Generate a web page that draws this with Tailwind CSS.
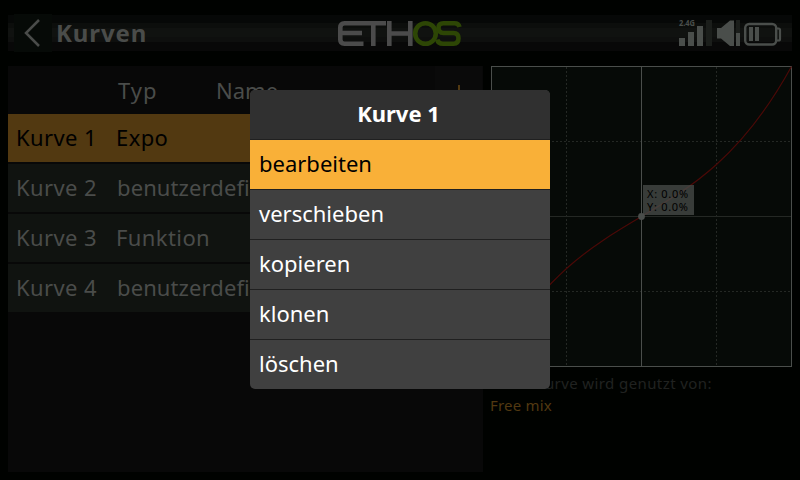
<!DOCTYPE html>
<html lang="de">
<head>
<meta charset="utf-8">
<title>Kurven</title>
<script src="https://cdn.jsdelivr.net/npm/@tailwindcss/browser@4"></script>
</head>
<body class="bg-black">
<div class="relative w-[800px] h-[480px] overflow-hidden bg-[#000200] px-2 pb-2 font-['Noto_Sans','Open_Sans',sans-serif] text-[22px] text-[#4a4c4a] whitespace-nowrap flex flex-col">
  <header class="h-[66px] shrink-0 pt-[15px]">
    <div class="relative h-9 flex items-center bg-[linear-gradient(#060807_0_8px,#0c0e0c_8px_13px,#101210_13px_22px,#0e0f0e_22px_27px,#080808_27px)]">
      <svg class="ml-[6px] w-[38px] h-[38px] bg-[#060a07]" viewBox="0 0 38 38" fill="none" stroke="#4a4c4a" stroke-width="2.5"><path d="M25 6 12 19 25 32"/></svg>
      <h1 class="ml-[4px] font-bold text-[24px] leading-9 tracking-[0.9px]">Kurven</h1>
      <svg class="absolute left-[330px] top-[5px] w-[124px] h-[28px]" viewBox="0 0 124 28" fill="none" stroke-width="4.6">
        <g stroke="#4b4b4b"><path d="M25 3.300H6.500Q2.300 3.300 2.300 7.500V19.500Q2.300 23.700 6.500 23.700H25.500M2.300 13H24M25 3.300H48M35.300 3V26M51.300 1V26M51.300 13.500H72M72.300 1V26"/></g>
        <g stroke="#2d4605"><circle cx="87.500" cy="13.500" r="10.300"/><path d="M121.500 7Q120.500 3.300 116.500 3.300H105.500Q100.500 3.300 100.500 8T105.500 13H115.500Q120.500 13 120.500 18.300T115.500 23.700H105Q100 23.700 99.300 19.500"/></g>
      </svg>
      <svg class="absolute left-[670px] top-[3px] w-[105px] h-[30px]" viewBox="678 18 105 30" fill="#4a4e4b">
        <text x="679" y="26" font-size="8" font-weight="700" textLength="16" lengthAdjust="spacingAndGlyphs">2.4G</text>
        <path d="M679 38h6v8h-6zM688 32h6v14h-6zM697 26h6v20h-6z"/>
        <path fill="#1b1e1b" d="M706 20h6v26h-6zM736 20h4v13h-4z"/>
        <path d="M717 28h4L730 20.500h4v25.500h-4L721 38.500h-4zM736 33h4v13h-4z"/>
        <rect x="745.200" y="24" width="31" height="20.500" rx="4" fill="none" stroke="#4a4e4b" stroke-width="2.400"/>
        <path d="M776.500 28.500h2q1.500 0 1.500 1.500v9q0 1.500-1.500 1.500h-2" fill="none" stroke="#4a4e4b" stroke-width="2.200"/>
        <path d="M749 27h4v14h-4zM755 27h4v14h-4z"/>
      </svg>
    </div>
  </header>
  <main class="flex grow gap-[7px]">
    <section class="w-[475px] bg-[#080808] flex flex-col gap-[2px]">
      <div class="h-12 -mb-[2px] flex items-center">
        <div class="w-[110px]"></div><div class="w-[98px] tracking-[1px]">Typ</div><div>Name</div>
        <div class="ml-auto mr-[1px] w-[47px] h-12 bg-[#0a0a0a] flex items-center justify-center pt-[3px]">
          <svg class="w-[14px] h-[14px]" viewBox="0 0 14 14" fill="none" stroke="#523911" stroke-width="2"><path d="M7 0V14M0 7H14"/></svg>
        </div>
      </div>
      <div class="h-12 bg-[#523911] text-black flex items-center pl-2 pb-[2px]"><div class="w-[100px] tracking-[0.4px]">Kurve 1</div><div class="tracking-[0.4px]">Expo</div></div>
      <div class="h-12 bg-[#101310] flex items-center pl-2 pb-[2px]"><div class="w-[100px] tracking-[0.4px]">Kurve 2</div><div class="pl-px tracking-[0.1px]">benutzerdefiniert</div></div>
      <div class="h-12 bg-[#101310] flex items-center pl-2 pb-[2px]"><div class="w-[100px] tracking-[0.4px]">Kurve 3</div><div class="tracking-[0.4px]">Funktion</div></div>
      <div class="h-12 bg-[#101310] flex items-center pl-2 pb-[2px]"><div class="w-[100px] tracking-[0.4px]">Kurve 4</div><div class="pl-px tracking-[0.1px]">benutzerdefiniert</div></div>
    </section>
    <section class="w-[302px] text-[15px]">
      <div class="relative w-[302px] h-[302px]">
        <svg class="w-[302px] h-[302px]" viewBox="490 66 302 302" fill="none">
          <rect x="491.500" y="66.500" width="300" height="300" fill="#060a07" stroke="#4a4e4b"/>
          <path d="M566.500 67V366M716.500 67V366M492 141.500H791M492 291.500H791" stroke="#242824" stroke-dasharray="2 2"/>
          <path d="M492 216.500H791" stroke="#242824"/>
          <path d="M641.500 67V366" stroke="#4a4e4b"/>
          <path d="M491.500 366.500C541.500 275.700 591.500 246.100 641.500 216.500S741.500 157.300 791.500 66.500" stroke="#4b0907" stroke-width="1.200"/>
          <circle cx="641.500" cy="216.500" r="3.400" fill="#4a4e4b"/>
        </svg>
        <div class="absolute left-[153px] top-[119px] w-[51px] h-[30px] bg-[#4a4e4b]/75 text-black text-[11px] leading-[13px] pt-[2px] pl-1 tracking-[0.7px]">X: 0.0%<br>Y: 0.0%</div>
      </div>
      <p class="mt-[4px] h-[22px] leading-[22px] text-[#202220] tracking-[0.4px]">Diese Kurve wird genutzt von:</p>
      <p class="h-[22px] leading-[22px] text-[#523911] tracking-[0.2px]">Free mix</p>
    </section>
  </main>
  <div class="absolute left-[250px] top-[90px] w-[300px] h-[299px] rounded-[5px] overflow-hidden bg-[#404040] text-white">
    <div class="h-[50px] border-b border-[#202020] bg-[#303030] font-bold flex items-center justify-center pr-[3px] pb-[2px]">Kurve 1</div>
    <div class="h-[50px] border-b border-[#202020] bg-[#f9b038] text-black flex items-center pl-[9px] pb-[2px]">bearbeiten</div>
    <div class="h-[50px] border-b border-[#202020] flex items-center pl-[9px] pb-[2px]">verschieben</div>
    <div class="h-[50px] border-b border-[#202020] flex items-center pl-[9px] pb-[2px]">kopieren</div>
    <div class="h-[50px] border-b border-[#202020] flex items-center pl-[9px] pb-[2px]">klonen</div>
    <div class="h-[49px] flex items-center pl-[9px] pb-[2px]">löschen</div>
  </div>
</div>
</body>
</html>
